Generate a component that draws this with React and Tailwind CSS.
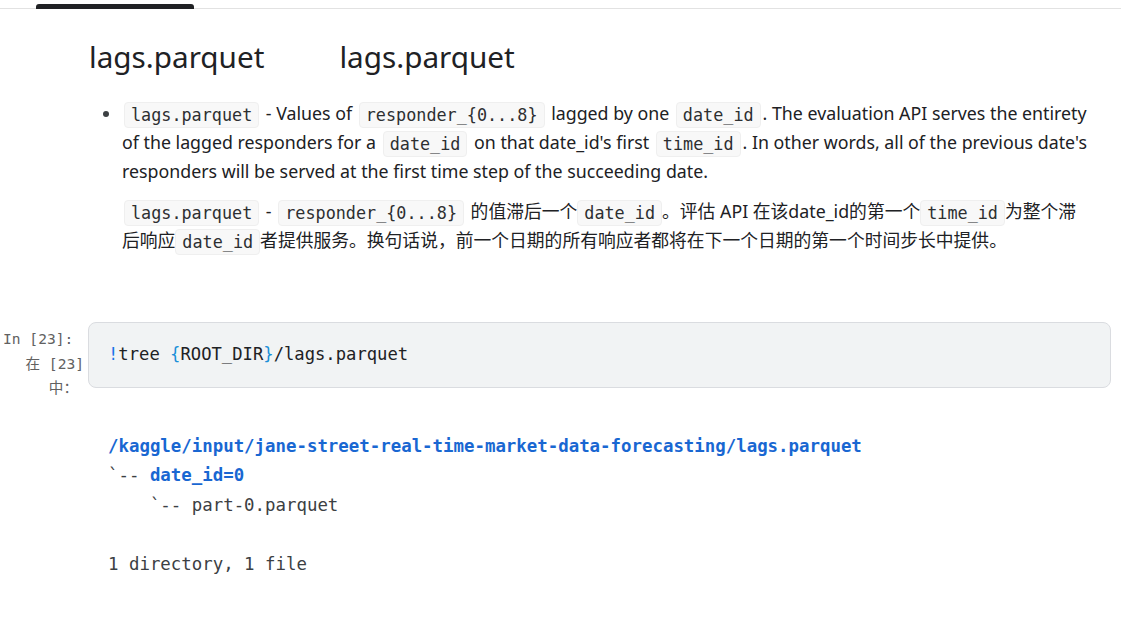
import React from "react";

const body = { fontFamily: '"Noto Sans", "Noto Sans CJK SC", sans-serif' };
const mono = { fontFamily: '"DejaVu Sans Mono", "Liberation Mono", "Noto Sans CJK SC", monospace' };

function C({ children, tight }) {
  return (
    <span
      className={
        "inline-block rounded-[4px] border border-[#efefef] bg-[#f8f8f8] px-[6px] leading-[24px] text-[16.8px] text-[#2d2f31] align-middle " +
        (tight ? "mx-0" : "mx-[2px]")
      }
      style={mono}
    >
      {children}
    </span>
  );
}

export default function App() {
  return (
    <div className="w-[1121px] h-[617px] bg-white overflow-hidden text-[#202124]" style={body}>
      {/* top tab bar */}
      <div className="relative h-[9px] border-b border-[#e2e2e2]">
        <div className="absolute left-[36px] top-[4px] h-[5px] w-[158px] rounded-t-[3px] bg-[#202124]" />
      </div>

      {/* markdown */}
      <div className="pl-[89px]">
        <h1 className="mt-[28px] flex gap-[75px] text-[29.7px] leading-[40px] font-normal text-[#202124]">
          <span>lags.parquet</span>
          <span>lags.parquet</span>
        </h1>

        <ul className="mt-[22px] pl-[33px] list-disc text-[17.8px] leading-[29px] marker:text-[#3c4043]">
          <li className="pl-0">
            <div className="whitespace-nowrap h-[29px]">
              <C>lags.parquet</C> - Values of <C>{"responder_{0...8}"}</C> lagged by one <C>date_id</C>. The evaluation API serves the entirety
            </div>
            <div className="whitespace-nowrap h-[29px]">
              of the lagged responders for a <C>date_id</C> on that date_id's first <C>time_id</C>. In other words, all of the previous date's
            </div>
            <div className="whitespace-nowrap h-[29px]">responders will be served at the first time step of the succeeding date.</div>
            <div className="mt-[11px] whitespace-nowrap h-[29px]">
              <C>lags.parquet</C> - <C>{"responder_{0...8}"}</C> 的值滞后一个<C tight>date_id</C>。评估 API 在该date_id的第一个<C tight>time_id</C>为整个滞
            </div>
            <div className="whitespace-nowrap h-[29px]">
              后响应<C tight>date_id</C>者提供服务。换句话说，前一个日期的所有响应者都将在下一个日期的第一个时间步长中提供。
            </div>
          </li>
        </ul>
      </div>

      {/* code cell */}
      <div className="mt-[67px] flex">
        <div className="w-[88px] shrink-0 pt-[5px] text-[14.6px] leading-[24.5px] text-[#616161]" style={mono}>
          <div className="pl-[3px]">In [23]:</div>
          <div className="text-right pr-[4px]">在 [23]</div>
          <div className="text-right pr-[10px]">中：</div>
        </div>
        <div className="flex h-[66px] w-[1023px] items-center rounded-[8px] border border-[#dadce0] bg-[#f1f3f4] pl-[19px] text-[17.2px] text-[#202124]" style={mono}>
          <span className="whitespace-pre">
            <span className="text-[#1a73e8]">!</span>
            {"tree "}
            <span className="text-[#1a8fd8]">{"{"}</span>
            {"ROOT_DIR"}
            <span className="text-[#1a8fd8]">{"}"}</span>
            {"/lags.parquet"}
          </span>
        </div>
      </div>

      {/* output */}
      <div className="mt-[31px] pl-[108px] text-[17.4px] leading-[29.7px] text-[#3c4043] whitespace-pre" style={mono}>
        <div className="font-bold text-[#1967d2]">/kaggle/input/jane-street-real-time-market-data-forecasting/lags.parquet</div>
        <div>
          {"`-- "}
          <span className="font-bold text-[#1967d2]">date_id=0</span>
        </div>
        <div>{"    `-- part-0.parquet"}</div>
        <div>{" "}</div>
        <div>1 directory, 1 file</div>
      </div>
    </div>
  );
}
